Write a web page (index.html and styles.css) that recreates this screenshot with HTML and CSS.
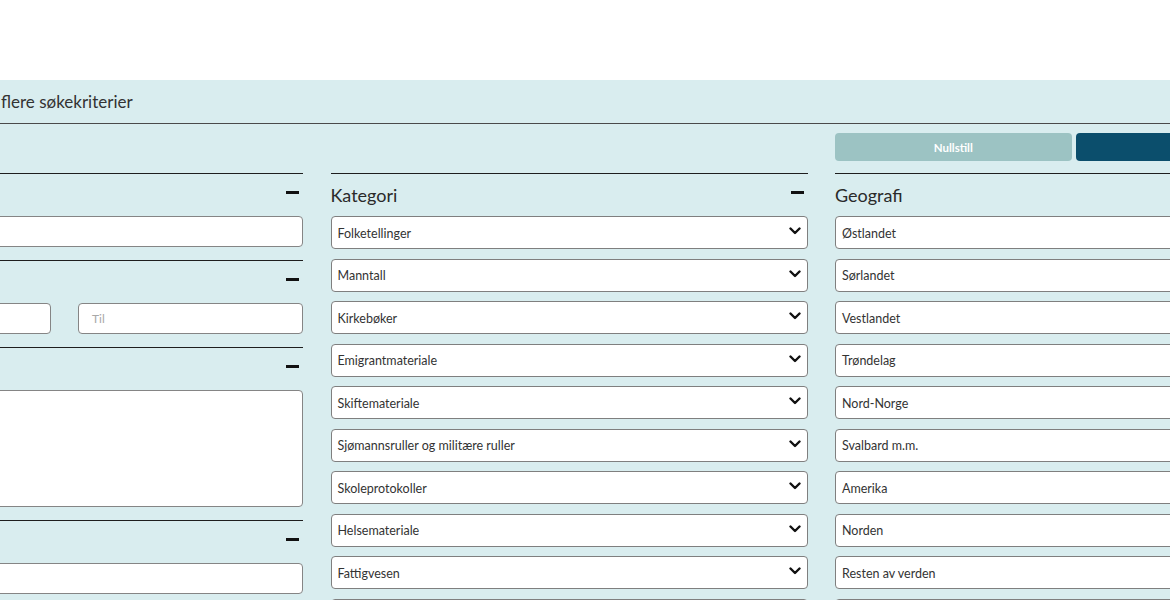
FILE: index.html
```html
<!DOCTYPE html>
<html lang="no">
<head>
<meta charset="utf-8">
<title>Søk</title>
<link rel="stylesheet" href="styles.css">
</head>
<body>
<div class="topbar"></div>
<section class="criteria">
  <div class="wrap">
    <div class="panel-head"><span class="panel-title">flere søkekriterier</span></div>
    <div class="grid actions">
      <div></div>
      <div></div>
      <div class="btns">
        <button class="btn btn-reset">Nullstill</button>
        <button class="btn btn-search" aria-label="Søk"></button>
      </div>
    </div>
    <div class="grid cols">
      <div class="col">
        <div class="sec">
          <div class="sec-head"><span class="sec-title"></span><span class="minus"></span></div>
          <div class="sec-body"><div class="field"></div></div>
        </div>
        <div class="sec">
          <div class="sec-head"><span class="sec-title"></span><span class="minus"></span></div>
          <div class="sec-body pair">
            <div class="field"></div>
            <div class="field"><span class="ph">Til</span></div>
          </div>
        </div>
        <div class="sec">
          <div class="sec-head"><span class="sec-title"></span><span class="minus"></span></div>
          <div class="sec-body"><div class="field area"></div></div>
        </div>
        <div class="sec">
          <div class="sec-head"><span class="sec-title"></span><span class="minus"></span></div>
          <div class="sec-body"><div class="field"></div></div>
        </div>
      </div>
      <div class="col">
        <div class="sec">
          <div class="sec-head"><span class="sec-title">Kategori</span><span class="minus"></span></div>
          <div class="list">
            <div class="sel"><span>Folketellinger</span><svg class="chev" viewBox="0 0 12 8"><polyline points="1.5,1.5 6,6 10.5,1.5"/></svg></div>
            <div class="sel"><span>Manntall</span><svg class="chev" viewBox="0 0 12 8"><polyline points="1.5,1.5 6,6 10.5,1.5"/></svg></div>
            <div class="sel"><span>Kirkebøker</span><svg class="chev" viewBox="0 0 12 8"><polyline points="1.5,1.5 6,6 10.5,1.5"/></svg></div>
            <div class="sel"><span>Emigrantmateriale</span><svg class="chev" viewBox="0 0 12 8"><polyline points="1.5,1.5 6,6 10.5,1.5"/></svg></div>
            <div class="sel"><span>Skiftemateriale</span><svg class="chev" viewBox="0 0 12 8"><polyline points="1.5,1.5 6,6 10.5,1.5"/></svg></div>
            <div class="sel"><span>Sjømannsruller og militære ruller</span><svg class="chev" viewBox="0 0 12 8"><polyline points="1.5,1.5 6,6 10.5,1.5"/></svg></div>
            <div class="sel"><span>Skoleprotokoller</span><svg class="chev" viewBox="0 0 12 8"><polyline points="1.5,1.5 6,6 10.5,1.5"/></svg></div>
            <div class="sel"><span>Helsemateriale</span><svg class="chev" viewBox="0 0 12 8"><polyline points="1.5,1.5 6,6 10.5,1.5"/></svg></div>
            <div class="sel"><span>Fattigvesen</span><svg class="chev" viewBox="0 0 12 8"><polyline points="1.5,1.5 6,6 10.5,1.5"/></svg></div>
            <div class="sel"><span></span><svg class="chev" viewBox="0 0 12 8"><polyline points="1.5,1.5 6,6 10.5,1.5"/></svg></div>
          </div>
        </div>
      </div>
      <div class="col">
        <div class="sec">
          <div class="sec-head"><span class="sec-title">Geografi</span><span class="minus"></span></div>
          <div class="list">
            <div class="sel"><span>Østlandet</span></div>
            <div class="sel"><span>Sørlandet</span></div>
            <div class="sel"><span>Vestlandet</span></div>
            <div class="sel"><span>Trøndelag</span></div>
            <div class="sel"><span>Nord-Norge</span></div>
            <div class="sel"><span>Svalbard m.m.</span></div>
            <div class="sel"><span>Amerika</span></div>
            <div class="sel"><span>Norden</span></div>
            <div class="sel"><span>Resten av verden</span></div>
            <div class="sel"><span></span></div>
          </div>
        </div>
      </div>
    </div>
  </div>
</section>
</body>
</html>
```
FILE: styles.css
```css
html, body {
  margin: 0;
  padding: 0;
  background: #ffffff;
  overflow: hidden;
  font-family: Lato, "Noto Sans", sans-serif;
  color: #2b2b2b;
}
.topbar {
  height: 80px;
  background: #ffffff;
}
.criteria {
  background: #d9edef;
  height: 520px;
  overflow: hidden;
}
.wrap {
  width: 1486px;
  margin-left: -174px;
}
.panel-head {
  height: 44px;
  border-bottom: 1px solid #4a4a4a;
  display: flex;
  align-items: center;
  padding-left: 175px;
  box-sizing: border-box;
}
.panel-title {
  font-size: 17px;
  color: #333;
}
.grid {
  display: grid;
  grid-template-columns: 477px 477px 477px;
  column-gap: 27.5px;
}
.actions {
  padding-top: 9px;
  padding-bottom: 12px;
}
.btns {
  display: flex;
  gap: 4px;
}
.btn {
  flex: 1;
  height: 28px;
  border: none;
  border-radius: 4px;
  font-family: inherit;
  font-size: 11.5px;
  font-weight: 700;
  color: #ffffff;
}
.btn-reset { background: #9cc3c3; }
.btn-search { background: #0b4e6c; }
.sec {
  border-top: 1px solid #1e1e1e;
}
.sec-head {
  height: 42px;
  display: flex;
  align-items: center;
  justify-content: space-between;
}
.sec-title {
  font-size: 18px;
  color: #2a2a2a;
}
.minus {
  width: 13px;
  height: 3px;
  background: #111;
  margin-right: 4px;
  margin-bottom: 5px;
}
.sec-body {
  padding-bottom: 13px;
}
.pair {
  display: grid;
  grid-template-columns: 1fr 1fr;
  column-gap: 27px;
}
.field {
  height: 31px;
  box-sizing: border-box;
  background: #fff;
  border: 1px solid #858585;
  border-radius: 4px;
  display: flex;
  align-items: center;
  padding-left: 13px;
}
.field.area {
  height: 117px;
}
.ph {
  font-size: 12px;
  color: #a8a8a8;
}
.list {
  display: flex;
  flex-direction: column;
  gap: 9.5px;
}
.sel {
  height: 33px;
  box-sizing: border-box;
  background: #fff;
  border: 1px solid #7f7f7f;
  border-radius: 4px;
  display: flex;
  align-items: center;
  justify-content: space-between;
  padding: 1px 6px 0 6px;
  font-size: 12.5px;
  color: #333;
}
.chev {
  width: 12px;
  height: 8px;
  margin-bottom: 4px;
}
.chev polyline {
  fill: none;
  stroke: #111;
  stroke-width: 2.4;
  stroke-linecap: round;
  stroke-linejoin: round;
}
```
